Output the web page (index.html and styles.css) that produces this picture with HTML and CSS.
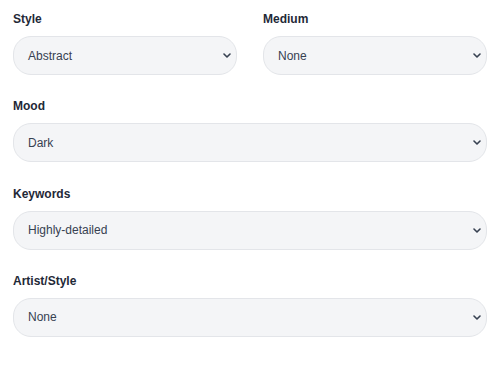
FILE: index.html
```html
<!DOCTYPE html>
<html>
<head>
  <title>Prompt Options</title>
  <link rel="stylesheet" href="styles.css">
</head>
<body>
  <form class="options">
    <div class="row two">
      <div class="field">
        <label>Style</label>
        <div class="select">
          <span>Abstract</span>
          <svg class="chevron" viewBox="0 0 8 5" width="8" height="5"><path d="M1 1l3 3 3-3"/></svg>
        </div>
      </div>
      <div class="field">
        <label>Medium</label>
        <div class="select">
          <span>None</span>
          <svg class="chevron" viewBox="0 0 8 5" width="8" height="5"><path d="M1 1l3 3 3-3"/></svg>
        </div>
      </div>
    </div>

    <div class="field">
      <label>Mood</label>
      <div class="select">
        <span>Dark</span>
        <svg class="chevron" viewBox="0 0 8 5" width="8" height="5"><path d="M1 1l3 3 3-3"/></svg>
      </div>
    </div>

    <div class="field">
      <label>Keywords</label>
      <div class="select">
        <span>Highly-detailed</span>
        <svg class="chevron" viewBox="0 0 8 5" width="8" height="5"><path d="M1 1l3 3 3-3"/></svg>
      </div>
    </div>

    <div class="field">
      <label>Artist/Style</label>
      <div class="select">
        <span>None</span>
        <svg class="chevron" viewBox="0 0 8 5" width="8" height="5"><path d="M1 1l3 3 3-3"/></svg>
      </div>
    </div>
  </form>
</body>
</html>
```

FILE: styles.css
```css
body {
  margin: 0;
  padding: 11px 13px;
  background: #fff;
  font-family: "Liberation Sans", Arial, sans-serif;
  color: #1f2937;
}

.options {
  display: flex;
  flex-direction: column;
  gap: 23.34px;
}

.row.two {
  display: grid;
  grid-template-columns: 1fr 1fr;
  gap: 26px;
}

.field label {
  display: block;
  font-size: 12px;
  font-weight: 700;
  line-height: 16px;
  margin-bottom: 9px;
  color: #1f2937;
}

.select {
  display: flex;
  align-items: center;
  justify-content: space-between;
  height: 39px;
  box-sizing: border-box;
  padding: 0 5px 0 14px;
  background: #f4f5f7;
  border: 1px solid #e3e5e9;
  border-radius: 18px;
  font-size: 12px;
  color: #374151;
}

.chevron {
  fill: none;
  stroke: #374151;
  stroke-width: 1.6;
  stroke-linecap: round;
  stroke-linejoin: round;
}
```
